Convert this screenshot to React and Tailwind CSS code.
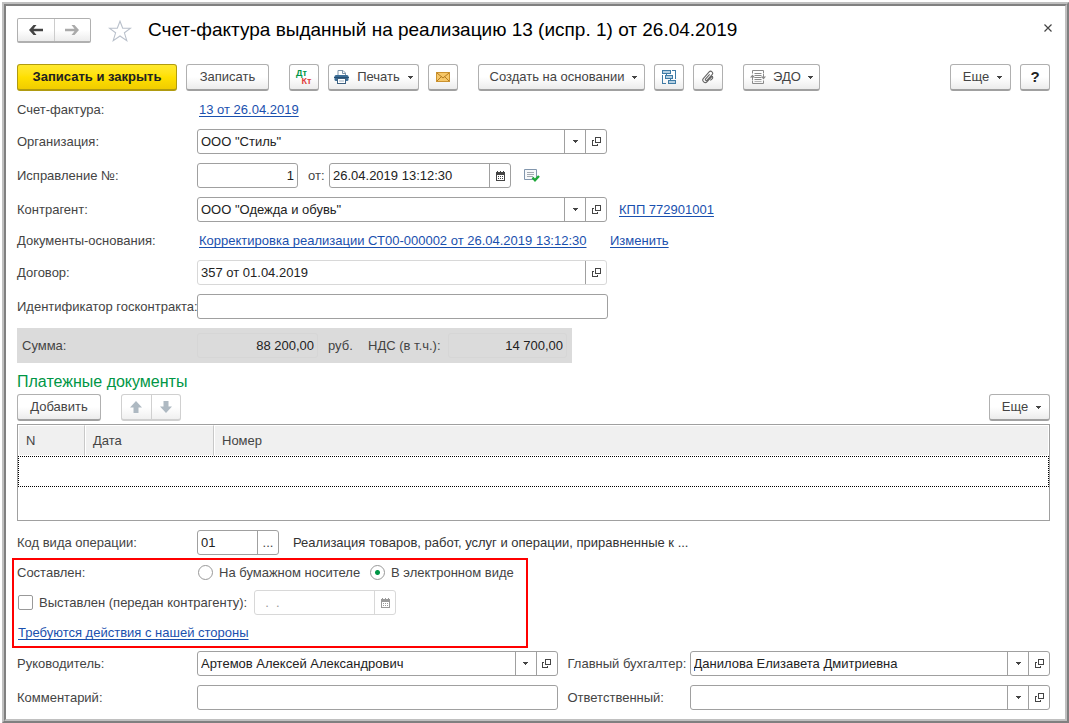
import React from "react";

const ArrowIcon = ({ flip, color }) => (
  <svg width="14" height="10" viewBox="0 0 14 10" className={flip ? "rotate-180" : ""}>
    <path d="M0 5 4.500 0H7.500L4.500 3.700H14V6.300H4.500L7.500 10H4.500z" fill={color} />
  </svg>
);

const StarIcon = () => (
  <svg width="24" height="22" viewBox="0 0 24 22">
    <path
      d="M12 1.2 14.7 8.2H22.6L16.4 12.8 18.8 20.6 12 16 5.2 20.6 7.6 12.8 1.4 8.2H9.3Z"
      fill="#fff"
      stroke="#b9c0cb"
      strokeWidth="1.1"
    />
  </svg>
);

const Caret = () => (
  <svg width="5" height="3" viewBox="0 0 5 3" shapeRendering="crispEdges">
    <path d="M0 0h5v1H4v1H3v1H2V2H1V1H0z" fill="#444" />
  </svg>
);

const OpenIcon = () => (
  <svg width="9" height="9" viewBox="0 0 9 9" shapeRendering="crispEdges">
    <path d="M3 0h6v6H3zM4 1v4h4V1zM0 3h2v1H1v4h4V7h1v2H0z" fill="#444" fillRule="evenodd" />
  </svg>
);

const CalendarIcon = ({ color = "#444" }) => (
  <svg width="9" height="10" viewBox="0 0 9 10" shapeRendering="crispEdges">
    <path d="M1 0h1v1h2V0h1v1h2V0h1v1h1v9H0V1h1z" fill={color} />
    <path d="M1 4h7v5H1z" fill="#fff" />
    <path d="M2 5h1v1H2zM4 5h1v1H4zM6 5h1v1H6zM2 7h1v1H2zM4 7h1v1H4zM6 7h1v1H6z" fill={color} />
  </svg>
);

const PrintIcon = () => (
  <svg width="15" height="14" viewBox="0 0 15 14">
    <path d="M4 5V.5h5L11.500 3v2" fill="#fff" stroke="#7d95ab" />
    <path d="M8.500 .5v3h3" fill="none" stroke="#7d95ab" />
    <rect x=".5" y="5" width="14" height="6" rx="1.500" fill="#3b6d96" />
    <rect x="0" y="7" width="15" height="1" fill="#254f74" />
    <rect x="3.500" y="8.500" width="8" height="5" fill="#fff" stroke="#3b5f80" />
    <path d="M5 11h5" stroke="#9fb2c3" />
  </svg>
);

const MailIcon = () => (
  <svg width="14" height="10" viewBox="0 0 14 10">
    <rect x=".5" y=".5" width="13" height="9" fill="#f6c768" stroke="#cb922f" />
    <path d="M1 1l6 5 6-5M1 9l4.500-4.500M13 9L8.500 4.500" fill="none" stroke="#b57c22" />
  </svg>
);

const StructureIcon = () => (
  <svg width="14" height="14" viewBox="0 0 14 14" shapeRendering="crispEdges">
    <path
      d="M.5 .5h8v3h-8zM3.500 5.500h7v3h-7zM6.500 10.500h7v3h-7z"
      fill="#b5d0e2"
      stroke="#3f7ba5"
    />
    <path d="M10 .5h3.500V8.500M.5 5v8.500H4M4.500 4v1M8.500 9v1" fill="none" stroke="#3f7ba5" />
  </svg>
);

const ClipIcon = () => (
  <svg width="14" height="14" viewBox="0 0 14 14">
    <path
      d="M9.500 3.500V11a2.500 2.500 0 0 1-5 0V2.500a2 2 0 0 1 4 0V10a1 1 0 0 1-2 0V4M9.500 3.500C11.500 4 11.500 5 11 8"
      transform="rotate(42 7 7)"
      fill="none"
      stroke="#666"
      strokeWidth="1.100"
    />
  </svg>
);

const EdoIcon = () => (
  <svg width="16" height="14" viewBox="0 0 16 14">
    <path
      d="M2.500 3.500V.5h11v3M4.500 3.500h7M4.500 5.500h7M4.500 7.500h7M4.500 9.500h7M2.500 10.500v3h11v-3"
      fill="none"
      stroke="#8a8a8a"
    />
    <path d="M4.500 11.500h7" stroke="#b4b4b4" />
    <path d="M2.500 10V6M13.500 4v4" fill="none" stroke="#8a8a8a" />
    <path d="M0 7.500 2.500 4.500 5 7.500zM11 6.500h5L13.500 9.500z" fill="#8a8a8a" />
  </svg>
);

const ListCheckIcon = () => (
  <svg width="16" height="13" viewBox="0 0 16 13">
    <path d="M.5 .5h12v10H.5z" fill="#f7f9fb" stroke="#8296ad" />
    <path d="M3 3.500h7M3 5.500h7M3 7.500h6" stroke="#a3a9b0" />
    <path d="M8.500 8.500l2.500 2.700 4-4.200" fill="none" stroke="#1fa83a" strokeWidth="2.400" />
  </svg>
);

const MoveIcon = ({ down }) => (
  <svg width="12" height="12" viewBox="0 0 12 12" className={down ? "rotate-180" : ""}>
    <path d="M6 0 12 6.500H8.500V12h-5V6.500H0z" fill="#aeb9c2" />
  </svg>
);

const CloseIcon = () => (
  <svg width="8" height="8" viewBox="0 0 8 8">
    <path d="M.5 .5l7 7M7.500 .5l-7 7" stroke="#444" strokeWidth="1.200" />
  </svg>
);

const btn =
  "flex h-[27px] shrink-0 items-center justify-center rounded-[3px] border border-[#b0b0b0] border-b-2 border-b-[#a0a0a0] bg-linear-to-b from-white from-50% to-[#ececec] whitespace-nowrap";

const Button = ({ className = "", children, ...rest }) => (
  <button type="button" className={`${btn} ${className}`} {...rest}>
    {children}
  </button>
);

// Text box with the small buttons that 1C puts at its right edge
const Field = ({
  id,
  value = "",
  label,
  width = "w-full",
  border = "border-[#a0a0a0] bg-white",
  divider = "border-[#a0a0a0]",
  align = "",
  disabled,
  buttons = [],
}) => (
  <div className={`flex h-[25px] overflow-hidden rounded-[3px] border ${border} ${width}`}>
    <input
      id={id}
      type="text"
      aria-label={label}
      defaultValue={value}
      disabled={disabled}
      className={`min-w-0 flex-1 bg-transparent px-[3px] text-[#222] outline-none disabled:text-[#999] ${align}`}
    />
    {buttons.map((kind) => (
      <button
        key={kind}
        type="button"
        aria-label={kind}
        disabled={disabled}
        className={`flex w-[21px] shrink-0 items-center justify-center border-l ${divider}`}
      >
        {kind === "Выбрать" && <Caret />}
        {kind === "Открыть" && <OpenIcon />}
        {kind === "Календарь" && <CalendarIcon color={disabled ? "#999" : "#444"} />}
        {kind === "Показать все" && "..."}
      </button>
    ))}
  </div>
);

const Label = ({ htmlFor, children }) => (
  <label htmlFor={htmlFor} className="w-[180px] shrink-0 whitespace-nowrap">
    {children}
  </label>
);

const Link = ({ className = "", children }) => (
  <a href="#" className={`whitespace-nowrap text-[#1a50ae] underline underline-offset-2 ${className}`}>
    {children}
  </a>
);

const radio =
  "size-[15px] appearance-none rounded-full border border-[#999] bg-white checked:bg-[radial-gradient(circle,#009646_2px,transparent_3px)]";

const Header = () => (
  <header className="flex h-[25px] items-center">
    <div className="flex h-[25px] w-[74px] rounded-[2px] border border-[#b0b0b0] border-b-2 bg-linear-to-b from-white from-50% to-[#ececec]">
      <button type="button" aria-label="Назад" className="flex flex-1 items-center justify-center">
        <ArrowIcon color="#444" />
      </button>
      <button
        type="button"
        aria-label="Вперед"
        className="flex flex-1 items-center justify-center border-l border-[#ccc]"
      >
        <ArrowIcon flip color="#aaa" />
      </button>
    </div>
    <button type="button" aria-label="В избранное" className="ml-[17px]">
      <StarIcon />
    </button>
    <h1 className="ml-4 flex-1 text-[19px] whitespace-nowrap text-black">
      Счет-фактура выданный на реализацию 13 (испр. 1) от 26.04.2019
    </h1>
    <button type="button" aria-label="Закрыть" className="-mr-2 self-start p-[6px]">
      <CloseIcon />
    </button>
  </header>
);

const Toolbar = () => (
  <div className="mt-3 flex gap-5">
    <div className="flex gap-[9px]">
      <button
        type="button"
        className="flex h-[27px] w-[160px] items-center justify-center rounded-[3px] border border-[#b09b10] border-b-2 bg-linear-to-b from-[#ffe92e] via-[#ffe000] to-[#f0cc00] font-bold whitespace-nowrap text-[#222]"
      >
        Записать и закрыть
      </button>
      <Button className="w-[83px]">Записать</Button>
    </div>
    <div className="flex gap-[9px]">
      <Button className="w-[30px]" aria-label="Проводки">
        <span className="flex flex-col text-[9px] leading-[8px] font-bold">
          <span className="pr-[5px] text-[#009646]">Дт</span>
          <span className="pl-[5px] text-[#e03c3c]">Кт</span>
        </span>
      </Button>
      <Button className="w-[91px] gap-2">
        <PrintIcon />
        Печать
        <Caret />
      </Button>
      <Button className="w-[30px]" aria-label="Отправить">
        <MailIcon />
      </Button>
    </div>
    <div className="flex gap-[9px]">
      <Button className="w-[167px] gap-2 pl-1">
        Создать на основании
        <Caret />
      </Button>
      <Button className="w-[30px]" aria-label="Структура подчиненности">
        <StructureIcon />
      </Button>
      <Button className="w-[30px]" aria-label="Файлы">
        <ClipIcon />
      </Button>
    </div>
    <Button className="w-[77px] gap-[7px]">
      <EdoIcon />
      ЭДО
      <Caret />
    </Button>
    <div className="ml-auto flex gap-[9px]">
      <Button className="w-[61px] gap-2 pl-1">
        Еще
        <Caret />
      </Button>
      <Button className="w-[30px] text-[15px] font-bold text-[#222]">?</Button>
    </div>
  </div>
);

const Summary = () => (
  <div className="flex h-[35px] w-[555px] items-center bg-[#dbdbdb] px-[5px]">
    <label htmlFor="sum" className="w-[175px]">
      Сумма:
    </label>
    <Field id="sum" value="88 200,00" width="w-[121px]" border="border-[#d6d6d6]" align="text-right" />
    <span className="w-10 pl-[10px]">руб.</span>
    <label htmlFor="vat" className="w-[90px] pl-[10px] whitespace-nowrap">
      НДС (в т.ч.):
    </label>
    <Field id="vat" value="14 700,00" width="flex-1" border="border-[#d6d6d6]" align="text-right" />
  </div>
);

const Payments = () => (
  <section>
    <h2 className="text-base leading-5 text-[#009646]">Платежные документы</h2>
    <div className="mt-0.5 flex gap-5">
      <Button className="w-[84px]">Добавить</Button>
      <div className="flex h-[27px] w-[60px] rounded-[3px] border border-b-2 border-[#d0d0d0] bg-linear-to-b from-white from-50% to-[#f0f0f0]">
        <button type="button" aria-label="Вверх" disabled className="flex flex-1 items-center justify-center">
          <MoveIcon />
        </button>
        <button
          type="button"
          aria-label="Вниз"
          disabled
          className="flex flex-1 items-center justify-center border-l border-[#d0d0d0]"
        >
          <MoveIcon down />
        </button>
      </div>
      <Button className="ml-auto w-[61px] gap-2 pl-1">
        Еще
        <Caret />
      </Button>
    </div>
    <div className="mt-[3px] h-[97px] border border-[#a0a0a0]">
      <table className="w-full table-fixed border-separate border-spacing-0 text-left">
        <thead>
          <tr className="h-[31px]">
            <th className="w-[67px] border border-white border-r-[#c8c8c8] bg-[#f0f0f0] px-[7px] font-normal">N</th>
            <th className="w-[129px] border border-white border-r-[#c8c8c8] bg-[#f0f0f0] px-[7px] font-normal">Дата</th>
            <th className="border border-white bg-[#f0f0f0] px-[7px] font-normal">Номер</th>
          </tr>
        </thead>
        <tbody>
          <tr className="h-[31px] outline-1 -outline-offset-1 outline-black outline-dotted">
            <td></td>
            <td></td>
            <td></td>
          </tr>
        </tbody>
      </table>
    </div>
  </section>
);

const Delivery = () => (
  <div className="-ml-[5px] flex w-[516px] flex-col gap-[5px] border-2 border-[#f00] pl-[3px]">
    <div className="flex h-[25px] items-center" role="radiogroup" aria-labelledby="made">
      <span id="made" className="w-[181px]">
        Составлен:
      </span>
      <label className="flex w-[172px] items-center gap-[6px] whitespace-nowrap">
        <input type="radio" name="form" className={radio} />
        На бумажном носителе
      </label>
      <label className="flex items-center gap-[6px] whitespace-nowrap">
        <input type="radio" name="form" defaultChecked className={radio} />
        В электронном виде
      </label>
    </div>
    <div className="flex items-center pl-px">
      <label className="flex w-[236px] items-center gap-[6px] whitespace-nowrap">
        <input type="checkbox" className="size-[15px] appearance-none rounded-[2px] border border-[#999] bg-white" />
        Выставлен (передан контрагенту):
      </label>
      <Field
        label="Дата выставления"
        value="  .  ."
        disabled
        width="w-[142px]"
        border="border-[#d8d8d8] bg-white"
        divider="border-[#d8d8d8]"
        align="whitespace-pre"
        buttons={["Календарь"]}
      />
    </div>
    <div className="flex h-[26px] items-center pl-px">
      <Link>Требуются действия с нашей стороны</Link>
    </div>
  </div>
);

const App = () => {
  return (
    <div className="min-h-screen bg-white pt-0.5 pl-0.5 font-['Liberation_Sans',Arial,sans-serif] text-[13px] text-[#444]">
      <div className="border-2 border-t-[#c0c0c0] border-r-[#808080] border-b-[#808080] border-l-[#c0c0c0]">
        <main className="flex flex-col gap-[9px] border-2 border-t-[#808080] border-r-[#c0c0c0] border-b-[#c0c0c0] border-l-[#808080] pt-3 pr-[15px] pb-[9px] pl-[11px]">
          <Header />
          <Toolbar />

          <div className="flex h-5 items-center">
            <Label>Счет-фактура:</Label>
            <Link className="ml-0.5">13 от 26.04.2019</Link>
          </div>
          <div className="flex items-center">
            <Label htmlFor="org">Организация:</Label>
            <Field id="org" value={'ООО "Стиль"'} width="w-[410px]" buttons={["Выбрать", "Открыть"]} />
          </div>
          <div className="flex items-center">
            <Label htmlFor="fix">Исправление №:</Label>
            <Field id="fix" value="1" width="w-[101px]" align="text-right" />
            <label htmlFor="date" className="w-[31px] pl-[10px]">
              от:
            </label>
            <Field id="date" value="26.04.2019 13:12:30" width="w-[182px]" buttons={["Календарь"]} />
            <span className="ml-[13px]">
              <ListCheckIcon />
            </span>
          </div>
          <div className="flex items-center">
            <Label htmlFor="partner">Контрагент:</Label>
            <Field
              id="partner"
              value={'ООО "Одежда и обувь"'}
              width="w-[410px]"
              buttons={["Выбрать", "Открыть"]}
            />
            <Link className="ml-3">КПП 772901001</Link>
          </div>
          <div className="flex h-5 items-center">
            <Label>Документы-основания:</Label>
            <span className="w-[413px] pl-0.5">
              <Link>Корректировка реализации СТ00-000002 от 26.04.2019 13:12:30</Link>
            </span>
            <Link>Изменить</Link>
          </div>
          <div className="flex items-center">
            <Label htmlFor="contract">Договор:</Label>
            <Field
              id="contract"
              value="357 от 01.04.2019"
              width="w-[410px]"
              border="border-[#d8d8d8] bg-white"
              buttons={["Открыть"]}
            />
          </div>
          <div className="flex items-center">
            <Label htmlFor="gov">Идентификатор госконтракта:</Label>
            <Field id="gov" width="w-[411px]" />
          </div>

          <Summary />
          <Payments />

          <div className="flex flex-col gap-[3px]">
            <div className="flex items-center">
              <Label htmlFor="code">Код вида операции:</Label>
              <Field id="code" value="01" width="w-[82px]" buttons={["Показать все"]} />
              <span className="ml-[14px] text-[#333]">
                Реализация товаров, работ, услуг и операции, приравненные к ...
              </span>
            </div>
            <Delivery />
            <div className="grid grid-cols-[180px_1fr_132px_1fr] items-center gap-y-[9px]">
              <label htmlFor="head">Руководитель:</label>
              <Field id="head" value="Артемов Алексей Александрович" buttons={["Выбрать", "Открыть"]} />
              <label htmlFor="accountant" className="pl-[10px] whitespace-nowrap">
                Главный бухгалтер:
              </label>
              <Field id="accountant" value="Данилова Елизавета Дмитриевна" buttons={["Выбрать", "Открыть"]} />
              <label htmlFor="comment">Комментарий:</label>
              <Field id="comment" />
              <label htmlFor="owner" className="pl-[10px]">
                Ответственный:
              </label>
              <Field id="owner" buttons={["Выбрать", "Открыть"]} />
            </div>
          </div>
        </main>
      </div>
    </div>
  );
};

export default App;
